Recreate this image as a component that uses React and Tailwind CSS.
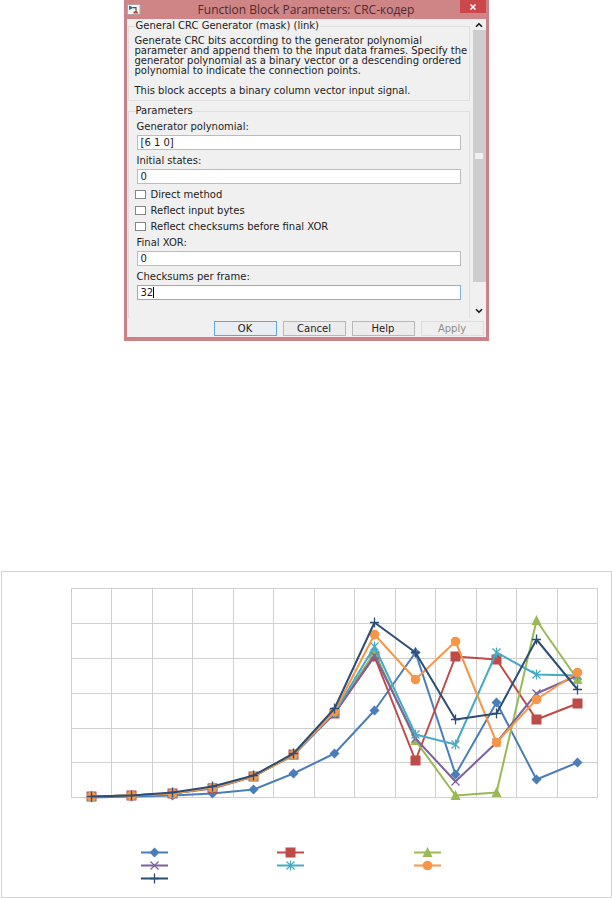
import { ChevronDown, ChevronUp } from "lucide-react";

const X = [91, 131, 172, 212, 253, 293, 334, 374, 415, 455, 496, 536, 577];
const GRID_X = [71, 111, 152, 192, 233, 273, 314, 354, 395, 435, 476, 516, 557, 597];
const GRID_Y = [588, 623, 658, 693, 728, 762, 797];

const SERIES = [
  { shape: "diamond", color: "#4a7ebb", y: [797, 796, 795, 793, 789, 773, 753, 710, 652, 774, 702, 779, 762] },
  { shape: "square", color: "#be4b48", y: [796, 795, 793, 788, 776, 754, 713, 656, 760, 656, 659, 719, 703] },
  { shape: "triangle", color: "#98b954", y: [796, 795, 793, 787, 776, 755, 712, 652, 740, 795, 792, 620, 679] },
  { shape: "cross", color: "#7d60a0", y: [796, 795, 793, 787, 776, 754, 713, 655, 738, 781, 742, 693, 675] },
  { shape: "star", color: "#46aac5", y: [796, 795, 793, 787, 776, 754, 712, 646, 734, 744, 652, 674, 675] },
  { shape: "circle", color: "#f79646", y: [796, 795, 793, 787, 776, 754, 711, 634, 679, 641, 742, 699, 672] },
  { shape: "plus", color: "#2c4d75", y: [796, 795, 792, 786, 775, 753, 708, 622, 652, 719, 713, 639, 689] },
];

function Marker({ shape, color, x, y }) {
  const at = `translate(${x} ${y})`;
  switch (shape) {
    case "diamond":
      return <path transform={at} d="M0-5 5 0 0 5-5 0Z" fill={color} />;
    case "square":
      return <rect transform={at} x="-5" y="-5" width="10" height="10" fill={color} />;
    case "triangle":
      return <path transform={at} d="M0-5.500 5 4.500H-5Z" fill={color} />;
    case "cross":
      return <path transform={at} d="M-4-4 4 4M4-4-4 4" stroke={color} strokeWidth="1.200" fill="none" />;
    case "star":
      return <path transform={at} d="M-4-4 4 4M4-4-4 4M0-5V5" stroke={color} strokeWidth="1.200" fill="none" />;
    case "circle":
      return <circle transform={at} r="4.800" fill={color} />;
    default:
      return <path transform={at} d="M-4.500 0H4.500M0-5V5" stroke={color} strokeWidth="1.300" fill="none" />;
  }
}

function Chart() {
  return (
    <svg viewBox="2 572 609 242" className="block w-full" role="img">
      <g stroke="#d0d0d0" strokeWidth="1" shapeRendering="crispEdges">
        {GRID_X.map((x) => (
          <line key={x} x1={x + 0.5} x2={x + 0.5} y1="588" y2="798" />
        ))}
        {GRID_Y.map((y) => (
          <line key={y} x1="71" x2="598" y1={y + 0.5} y2={y + 0.5} />
        ))}
      </g>
      {SERIES.map((s) => (
        <g key={s.shape}>
          <polyline
            points={s.y.map((y, i) => `${X[i] + 0.5},${y + 0.5}`).join(" ")}
            fill="none"
            stroke={s.color}
            strokeWidth="2"
            strokeLinejoin="round"
          />
          {s.y.map((y, i) => (
            <Marker key={X[i]} shape={s.shape} color={s.color} x={X[i] + 0.5} y={y + 0.5} />
          ))}
        </g>
      ))}
    </svg>
  );
}

function Legend() {
  return (
    <ul className="grid grid-cols-[136px_137px_136px] pt-8 pl-[139px] pb-3">
      {SERIES.map((s) => (
        <li key={s.shape}>
          <svg viewBox="0 0 28 13" className="block h-[13px] w-7">
            <line x1="0" x2="27" y1="6.500" y2="6.500" stroke={s.color} strokeWidth="2" />
            <Marker shape={s.shape} color={s.color} x={13.5} y={6.5} />
          </svg>
        </li>
      ))}
    </ul>
  );
}

function Field({ id, label, value, focused }) {
  return (
    <div className="flex flex-col gap-[3px]">
      <label htmlFor={id} className="leading-[10px]">
        {label}
      </label>
      <div className="relative">
        <input
          id={id}
          type="text"
          defaultValue={value}
          className={`block h-[15px] w-full border bg-white px-[3px] leading-[13px] outline-none ${
            focused ? "border-[#7fb0e0]" : "border-[#bcbcbc]"
          }`}
        />
        {focused && <span className="absolute top-0.5 left-4 h-[11px] w-px bg-black" />}
      </div>
    </div>
  );
}

function Check({ label }) {
  return (
    <label className="-ml-0.5 flex h-4 items-center gap-[5px]">
      <input type="checkbox" className="h-[9px] w-[11px] appearance-none border border-[#858585] bg-white" />
      {label}
    </label>
  );
}

function DialogButton({ children, primary, disabled }) {
  return (
    <button
      type="button"
      disabled={disabled}
      className={`h-[15px] flex-1 border text-center leading-[13px] ${
        primary
          ? "border-[#5fa5e6] bg-[#e9eef3]"
          : disabled
            ? "border-[#dcdcdc] bg-[#efefef] text-[#8d8d8d]"
            : "border-[#b8b8b8] bg-[#ececec]"
      }`}
    >
      {children}
    </button>
  );
}

function BlockIcon() {
  return (
    <svg viewBox="0 0 14 11" className="h-[11px] w-3.5">
      <rect x="0.5" y="0.5" width="12.500" height="10" fill="#f4f6f8" stroke="#b5a3a8" />
      <path d="M2 1.500 6.500 3.700 2 6Z" fill="#1f7396" />
      <path d="M6 3.700H9V6" fill="none" stroke="#35506a" strokeWidth="1.200" />
      <path d="M6.500 9.500V7.500H8L9 5.500 11.500 9.500Z" fill="#b8472a" />
    </svg>
  );
}

function Dialog() {
  return (
    <section className="mx-auto w-[365px] max-w-full border-x-[3px] border-b-4 border-[#cb8186] bg-[#f0f0f0] font-['DejaVu_Sans','Verdana',sans-serif] text-[10px] text-[#1c1c1c]">
      <header className="flex h-[19px] items-center bg-[#cf8486] font-['Open_Sans','Noto_Sans',sans-serif] text-xs">
        <BlockIcon />
        <h1 className="flex-1 pl-3 text-center text-[#4b2c30]">Function Block Parameters: CRC-кодер</h1>
        <button
          type="button"
          aria-label="Close"
          className="flex h-[13px] w-[26px] items-center justify-center self-start bg-[#cb4749]"
        >
          <svg viewBox="0 0 6 6" className="size-1.5">
            <path d="M0.500 0.500 5.500 5.500M5.500 0.500 0.500 5.500" stroke="#fff" strokeWidth="1.500" />
          </svg>
        </button>
      </header>

      <div className="flex h-[299px] overflow-hidden pt-px">
        <div className="min-w-0 flex-1 pl-px">
          <fieldset className="min-w-0 border border-[#dedede] px-[6px] pt-1 pb-1">
            <legend className="px-px leading-3">General CRC Generator (mask) (link)</legend>
            <p className="leading-[10px] whitespace-nowrap">
              Generate CRC bits according to the generator polynomial
              <br />
              parameter and append them to the input data frames. Specify the
              <br />
              generator polynomial as a binary vector or a descending ordered
              <br />
              polynomial to indicate the connection points.
            </p>
            <p className="pt-2.5 leading-[10px]">This block accepts a binary column vector input signal.</p>
          </fieldset>

          <fieldset className="mt-1 min-w-0 border border-b-0 border-[#dedede] px-2 pt-[5px] pb-5">
            <legend className="-ml-px leading-3">Parameters</legend>
            <div className="flex flex-col gap-[6px]">
              <Field id="polynomial" label="Generator polynomial:" value="[6 1 0]" />
              <Field id="initial" label="Initial states:" value="0" />
            </div>
            <div className="pt-0.5 pb-1">
              <Check label="Direct method" />
              <Check label="Reflect input bytes" />
              <Check label="Reflect checksums before final XOR" />
            </div>
            <div className="flex flex-col gap-[6px]">
              <Field id="final-xor" label="Final XOR:" value="0" />
              <Field id="checksums" label="Checksums per frame:" value="32" focused />
            </div>
          </fieldset>
        </div>

        <div className="ml-[3px] flex w-[13px] shrink-0 flex-col items-center">
          <ChevronUp className="h-2.5 w-2.5" strokeWidth={4} />
          <div className="flex h-[252px] w-full items-center justify-center bg-[#cdcdcd]">
            <div className="h-1.5 w-2 bg-[#f0f0f0]" />
          </div>
          <ChevronDown className="mt-auto mb-0.5 h-2.5 w-2.5" strokeWidth={4} />
        </div>
      </div>

      <footer className="flex gap-[6px] pt-[3px] pr-0.5 pb-px pl-[87px]">
        <DialogButton primary>OK</DialogButton>
        <DialogButton>Cancel</DialogButton>
        <DialogButton>Help</DialogButton>
        <DialogButton disabled>Apply</DialogButton>
      </footer>
    </section>
  );
}

export default function App() {
  return (
    <main className="bg-white">
      <Dialog />
      <figure className="mt-[230px] ml-px border border-[#d4d4d4]">
        <Chart />
        <Legend />
      </figure>
    </main>
  );
}
